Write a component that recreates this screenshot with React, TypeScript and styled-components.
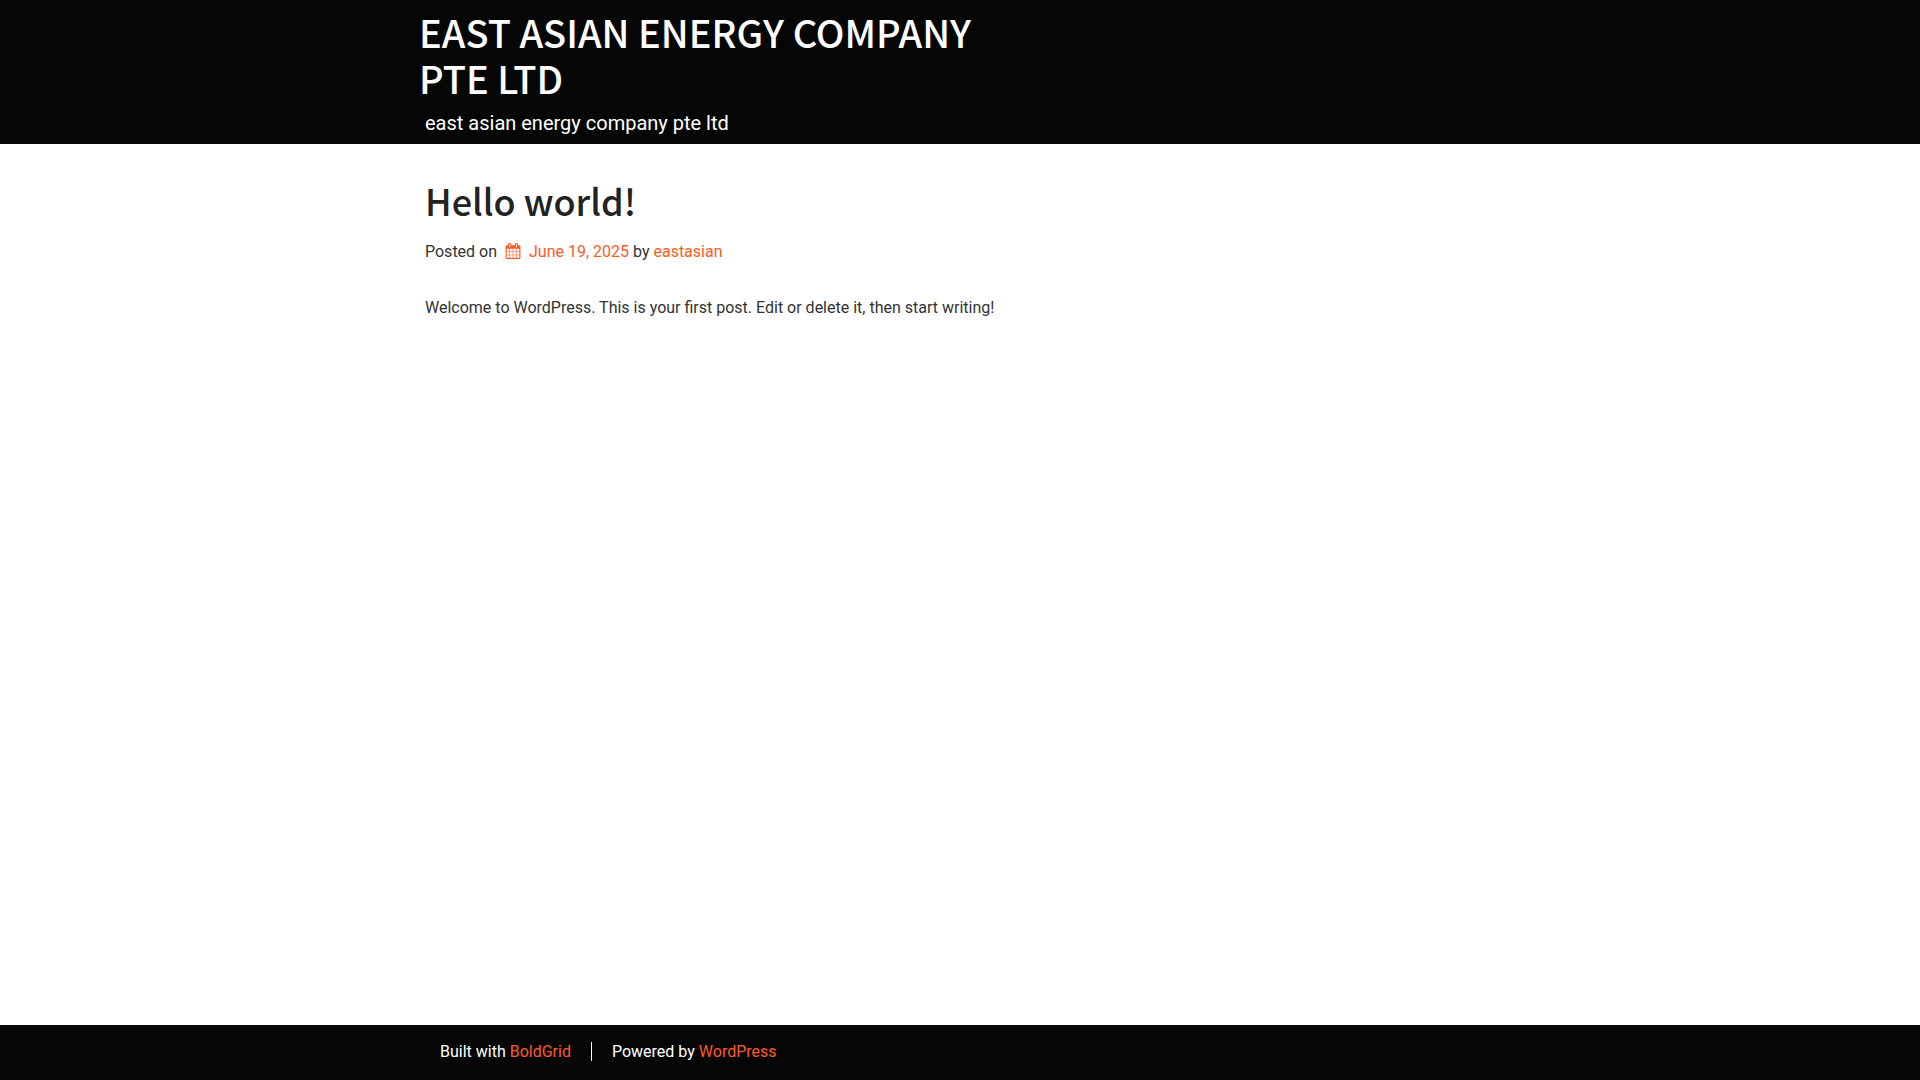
import React from "react";
import styled, { createGlobalStyle } from "styled-components";

const accent = "#fc5b28";
const ink = "#060606";
const headingFont = '"Source Sans Pro", "Noto Sans CJK JP", sans-serif';

const GlobalStyle = createGlobalStyle`
  *, *::before, *::after { box-sizing: border-box; }
  body {
    margin: 0;
    background: #fff;
    color: #333;
    font-family: Roboto, sans-serif;
    font-size: 16px;
    line-height: 24px;
  }
  h1, h2, p { margin: 0; }
`;

const Page = styled.div`
  display: flex;
  flex-direction: column;
  min-height: 100vh;
`;

const Container = styled.div`
  width: 100%;
  max-width: 1100px;
  margin: 0 auto;
  padding: 0 15px;
`;

const Header = styled.header`
  background: ${ink};
  color: #fff;
  padding: 9px 0 6px;
`;

const Branding = styled.div`
  max-width: 560px;
`;

const SiteTitle = styled.h1`
  margin-left: -6px;
  font-family: ${headingFont};
  font-size: 38px;
  font-weight: 500;
  line-height: 46px;
  text-transform: uppercase;
`;

const SiteLink = styled.a`
  color: inherit;
  text-decoration: none;
`;

const Tagline = styled.p`
  margin-top: 7px;
  font-size: 20px;
  line-height: 30px;
`;

const Main = styled.main`
  flex: 1;
  padding: 32px 0;
`;

const EntryTitle = styled.h2`
  font-family: ${headingFont};
  font-size: 36px;
  font-weight: 500;
  line-height: 48px;
  color: #222;
`;

const Meta = styled.p`
  margin-top: 16px;
`;

const AccentLink = styled.a`
  color: ${accent};
  text-decoration: none;
  &:hover { text-decoration: underline; }
`;

const DateIcon = styled.svg`
  width: 16px;
  height: 16px;
  margin: 0 8px 0 4px;
  vertical-align: -2px;
  fill: currentColor;
`;

const Content = styled.p`
  margin-top: 32px;
`;

const Footer = styled.footer`
  background: ${ink};
  color: #fff;
  padding: 15px 0 16px;
`;

const Credits = styled.div`
  display: flex;
  padding-left: 15px;
`;

const Credit = styled.span`
  & + & {
    display: flex;
    gap: 4px;
  }
  & + &::before {
    content: "";
    height: 19px;
    margin: 2px 16px 0 20px;
    border-left: 1px solid #fff;
  }
`;

const calendarPath =
  "M192 1664h288v-288h-288v288zM544 1664h320v-288h-320v288zM192 1312h288v-320h-288v320zM544 1312h320v-320h-320v320zM192 928h288v-288h-288v288zM928 1664h320v-288h-320v288zM544 928h320v-288h-320v288zM1312 1664h288v-288h-288v288zM928 1312h320v-320h-320v320zM576 448v-288q0-13-9.5-22.5t-22.5-9.5h-64q-13 0-22.5 9.5t-9.5 22.5v288q0 13 9.5 22.5t22.5 9.5h64q13 0 22.5-9.5t9.5-22.5zM1312 1312h288v-320h-288v320zM928 928h320v-288h-320v288zM1312 928h288v-288h-288v288zM1344 448v-288q0-13-9.5-22.5t-22.5-9.5h-64q-13 0-22.5 9.5t-9.5 22.5v288q0 13 9.5 22.5t22.5 9.5h64q13 0 22.5-9.5t9.5-22.5zM1728 384v1280q0 52-38 90t-90 38h-1408q-52 0-90-38t-38-90v-1280q0-52 38-90t90-38h128v-96q0-66 47-113t113-47h64q66 0 113 47t47 113v96h384v-96q0-66 47-113t113-47h64q66 0 113 47t47 113v96h128q52 0 90 38t38 90z";

export default function App() {
  return (
    <Page>
      <GlobalStyle />
      <Header>
        <Container>
          <Branding>
            <SiteTitle>
              <SiteLink href="#">East Asian Energy Company Pte Ltd</SiteLink>
            </SiteTitle>
            <Tagline>east asian energy company pte ltd</Tagline>
          </Branding>
        </Container>
      </Header>
      <Main>
        <Container>
          <article>
            <EntryTitle>
              <SiteLink href="#">Hello world!</SiteLink>
            </EntryTitle>
            <Meta>
              Posted on{" "}
              <AccentLink href="#">
                <DateIcon viewBox="0 0 1792 1792" aria-hidden="true">
                  <path d={calendarPath} />
                </DateIcon>
                <time dateTime="2025-06-19">June 19, 2025</time>
              </AccentLink>{" "}
              by <AccentLink href="#">eastasian</AccentLink>
            </Meta>
            <Content>
              Welcome to WordPress. This is your first post. Edit or delete it, then start writing!
            </Content>
          </article>
        </Container>
      </Main>
      <Footer>
        <Container>
          <Credits>
            <Credit>
              Built with <AccentLink href="#">BoldGrid</AccentLink>
            </Credit>
            <Credit>
              Powered by <AccentLink href="#">WordPress</AccentLink>
            </Credit>
          </Credits>
        </Container>
      </Footer>
    </Page>
  );
}
